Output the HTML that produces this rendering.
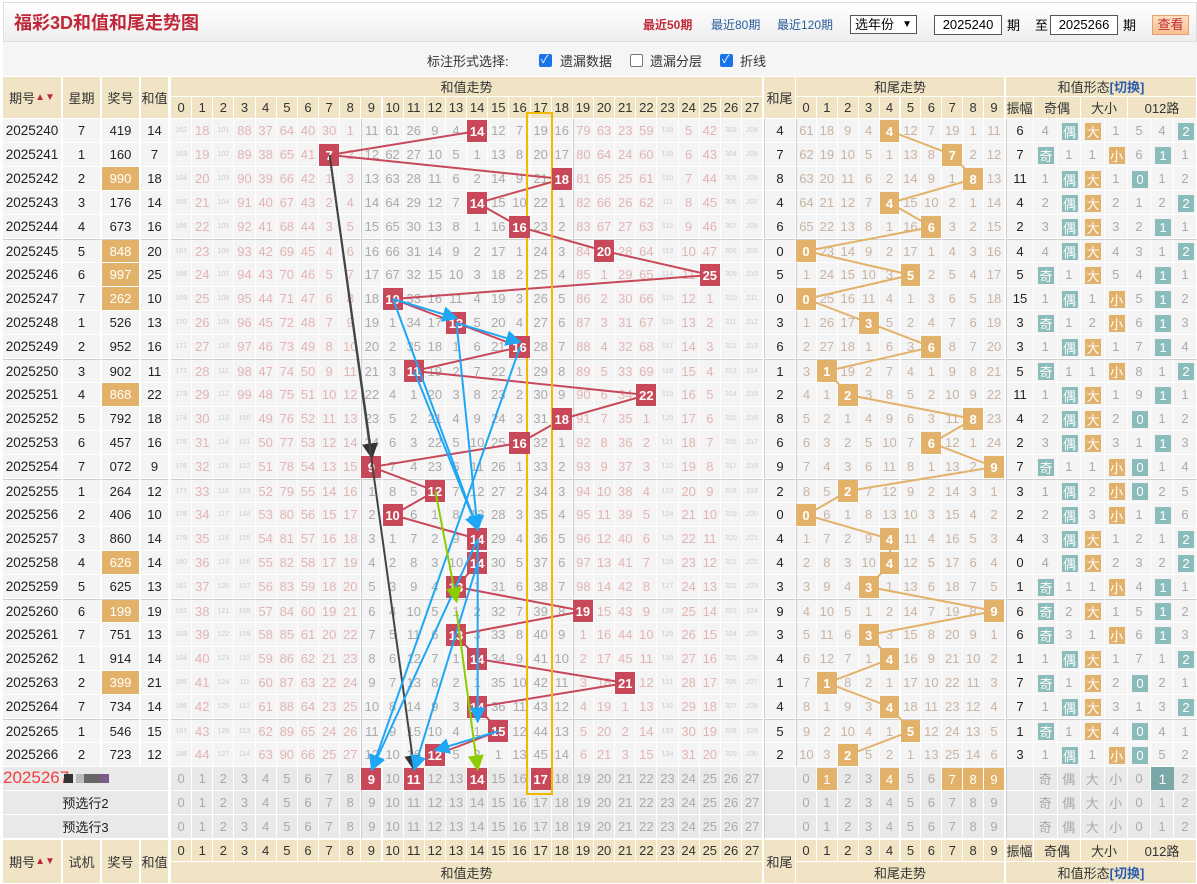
<!DOCTYPE html>
<html><head><meta charset="utf-8">
<style>
*{box-sizing:border-box;margin:0;padding:0}
body{width:1197px;height:884px;overflow:hidden;background:#fff;font-family:"Liberation Sans","Noto Sans CJK SC",sans-serif;position:relative}
.c{position:absolute;display:flex;align-items:center;justify-content:center;border-right:1px solid #fff;border-bottom:1px solid #fff;background:#f4f4f4;font-size:13px;color:#222;white-space:nowrap}
.h{background:#f0e4c5;color:#333;font-size:13px}
.b{position:absolute;display:flex;align-items:center;justify-content:center;color:#fff;font-size:13px;font-weight:bold}
#top{position:absolute;left:3px;top:2px;width:1194px;height:40px;background:linear-gradient(#fff,#eee);border:1px solid #ddd}
#opt{position:absolute;left:3px;top:42px;width:1194px;height:34px;background:#f5f5f5}
.cb{position:absolute;width:13px;height:13px;border-radius:2px}
.on{background:#1a73e8}
.off{border:1px solid #777;background:#fff}
svg{position:absolute;left:0;top:0}
</style></head><body>
<div id="top">
<div style="position:absolute;left:10px;top:6px;font-size:18px;font-weight:bold;color:#c0283a">福彩3D和值和尾走势图</div>
<div style="position:absolute;left:639px;top:13px;font-size:12px;color:#c0283a;font-weight:bold">最近50期</div>
<div style="position:absolute;left:707px;top:13px;font-size:12px;color:#2a5c9c">最近80期</div>
<div style="position:absolute;left:773px;top:13px;font-size:12px;color:#2a5c9c">最近120期</div>
<div style="position:absolute;left:846px;top:12px;width:67px;height:19px;border:1px solid #555;background:#fff;font-size:13px;padding-left:4px;line-height:17px">选年份 <span style="position:absolute;right:4px;font-size:10px">▼</span></div>
<div style="position:absolute;left:930px;top:12px;width:68px;height:20px;border:1px solid #555;background:#fff;font-size:13px;text-align:center;line-height:18px">2025240</div>
<div style="position:absolute;left:1003px;top:12px;font-size:13px">期</div>
<div style="position:absolute;left:1031px;top:12px;font-size:13px">至</div>
<div style="position:absolute;left:1046px;top:12px;width:68px;height:20px;border:1px solid #555;background:#fff;font-size:13px;text-align:center;line-height:18px">2025266</div>
<div style="position:absolute;left:1119px;top:12px;font-size:13px">期</div>
<div style="position:absolute;left:1148px;top:12px;width:37px;height:20px;border:1px solid #e8a070;background:linear-gradient(#fde0c0,#f7c090);font-size:13px;color:#c0283a;text-align:center;line-height:18px">查看</div>
</div>
<div id="opt">
<div style="position:absolute;left:424px;top:9px;font-size:13px;color:#333">标注形式选择:</div>
<div class="cb on" style="left:536px;top:12px"></div><div style="position:absolute;left:538px;top:9px;color:#fff;font-size:11px">✓</div>
<div style="position:absolute;left:557px;top:9px;font-size:13px;color:#333">遗漏数据</div>
<div class="cb off" style="left:627px;top:12px"></div>
<div style="position:absolute;left:647px;top:9px;font-size:13px;color:#333">遗漏分层</div>
<div class="cb on" style="left:717px;top:12px"></div><div style="position:absolute;left:719px;top:9px;color:#fff;font-size:11px">✓</div>
<div style="position:absolute;left:737px;top:9px;font-size:13px;color:#333">折线</div>
</div>
<div id="g"></div>
<script>
var G=document.getElementById('g');
function C(x,y,w,h,t,cls,st){var d=document.createElement('div');d.className='c '+(cls||'');d.style.cssText='left:'+x+'px;top:'+y+'px;width:'+w+'px;height:'+h+'px;'+(st||'');d.innerHTML=t;G.appendChild(d);return d;}
function B(x,y,w,h,t,bg,st){var d=document.createElement('div');d.className='b';d.style.cssText='left:'+x+'px;top:'+y+'px;width:'+w+'px;height:'+h+'px;background:'+bg+';'+(st||'');d.innerHTML=t;return d;}
var SW=21.15,TW=20.9;
function sx(v){return 171+v*SW}
function tx(i){return 796+i*TW}
var R=[[1034,1057.5],[1057.5,1081],[1081,1104.5],[1104.5,1128],[1128,1151],[1151,1174],[1174,1197]];
var per=[],wk=[7,1,2,3,4,5,6,7,1,2,3,4,5,6,7,1,2,3,4,5,6,7,1,2,7,1,2];
var nums=['419','160','990','176','673','848','997','262','526','952','902','868','792','457','072','264','406','860','626','625','199','751','914','399','734','546','723'];
var amp=[6,7,11,4,2,4,5,15,3,3,5,11,4,2,7,3,2,4,0,1,6,6,1,7,7,1,3];
var sums=nums.map(function(n){return +n[0]+ +n[1]+ +n[2]});
var S=[162,18,101,88,37,64,40,30,1,11,61,26,9,4,0,12,7,19,16,79,63,23,59,108,5,42,303,204];
var T=[61,18,9,4,0,12,7,19,1,11],F=[4,0,0,1,5,4,0];
var boxes=[];
var hx=[[3,62,'期号<span style="color:#c0283a;font-size:10px">▲▼</span>'],[63,101,'星期'],[102,140,'奖号'],[141,169,'和值']];
// header
hx.forEach(function(a){C(a[0],77,a[1]-a[0],42,a[2],'h')});
C(171,77,592,20,'和值走势','h');
for(var v=0;v<28;v++)C(sx(v),97,SW,22,v,'h');
C(764,77,32,42,'和尾','h');
C(796,77,209,20,'和尾走势','h');
for(var i=0;i<10;i++)C(tx(i),97,TW,22,i,'h');
C(1006,77,191,20,'和值形态 <span style="color:#2a5cac;font-weight:bold">[切换]</span>','h');
C(1006,97,28,22,'振幅','h');C(1034,97,47,22,'奇偶','h');C(1081,97,47,22,'大小','h');C(1128,97,69,22,'012路','h');
var sp=[],tp=[];
for(var r=0;r<27;r++){
 var y=119+r*24,s=sums[r],t=s%10;
 if(r>0){for(var v=0;v<28;v++)S[v]=(v==s)?0:S[v]+1;for(var i=0;i<10;i++)T[i]=(i==t)?0:T[i]+1;
  var o=s%2,bg=s>=14?0:1,m=s%3;
  var hit=[o==1,o==0,bg==0,bg==1,m==0,m==1,m==2];for(var k=0;k<7;k++)F[k]=hit[k]?0:F[k]+1;}
 var line=(r%5==0&&r>0)?'border-top:1px solid #ccc;':'';
 C(3,y,59,24,'2025'+(240+r),'',line+'font-size:13.5px');C(63,y,38,24,wk[r],'',line);
 var pair=nums[r][0]==nums[r][1]||nums[r][1]==nums[r][2]||nums[r][0]==nums[r][2];
 C(102,y,38,24,nums[r],'',line+(pair?'background:#e3b26a;color:#fff;':''));C(141,y,28,24,s,'',line);
 for(var v=0;v<28;v++){
  var col=(v>=9&&v<=18)?'#aaa':'#e4b4b4',txt=S[v],fs='';
  if(S[v]>=100){fs='font-size:7px;color:#ccc;';}
  C(sx(v),y,SW,24,v==s?'':txt,'',line+'color:'+col+';'+fs+(v==9||v==19?'border-left:1px solid #ccc;':''));
  if(v==s){boxes.push(B(sx(v),y+1,SW-1,22,v,'#c8485a'));sp.push([sx(v)+SW/2,y+12]);}
 }
 C(764,y,32,24,t,'',line+'border-left:1px solid #ccc;');
 for(var i=0;i<10;i++){C(tx(i),y,TW,24,i==t?'':T[i],'',line+'color:#c8b4a4;'+(i==0?'border-left:1px solid #ccc;':''));
  if(i==t){boxes.push(B(tx(i),y+1,TW-1,22,i,'#e3b26a'));tp.push([tx(i)+TW/2,y+12]);}}
 C(1006,y,28,24,amp[r],'',line+'border-left:1px solid #ccc;');
 var lab=['奇','偶','大','小','0','1','2'],bc=['#8bbcbc','#8bbcbc','#e3b26a','#e3b26a','#8bbcbc','#8bbcbc','#8bbcbc'];
 for(var k=0;k<7;k++){var a=R[k];C(a[0],y,a[1]-a[0],24,F[k]==0?'':F[k],'',line+'color:#aaa;');
  if(F[k]==0)boxes.push(B(a[0]+4,y+4,16,17,lab[k],bc[k],'font-weight:normal;font-size:13px'));}
}
// footer rows
for(var f=0;f<3;f++){var y=767+f*24;
 C(3,y,166,24,f==0?'':'预选行'+(f+1),'','background:#e9e9e9;');
 for(var v=0;v<28;v++){C(sx(v),y,SW,24,v,'','background:#e9e9e9;color:#aaa;'+(v==9||v==19?'border-left:1px solid #ccc;':''));
  if(f==0&&(v==9||v==11||v==14||v==17))boxes.push(B(sx(v),y+1,SW-1,22,v,'#c8485a'));}
 C(764,y,32,24,'','','background:#e9e9e9;border-left:1px solid #ccc;');
 for(var i=0;i<10;i++){C(tx(i),y,TW,24,i,'','background:#e9e9e9;color:#aaa;');
  if(f==0&&[1,4,7,8,9].indexOf(i)>=0)boxes.push(B(tx(i),y+1,TW-1,22,i,'#e3b26a','font-weight:normal'));}
 C(1006,y,28,24,'','','background:#e9e9e9;border-left:1px solid #ccc;');
 var lab=['奇','偶','大','小','0','1','2'];
 for(var k=0;k<7;k++){var a=R[k];C(a[0],y,a[1]-a[0],24,lab[k],'','background:#e9e9e9;color:#aaa;');}
 if(f==0)boxes.push(B(1151,y,23,23,'1','#7aa8a8','font-weight:normal;font-size:14px'));
}
var lb=document.createElement('div');lb.style.cssText='position:absolute;left:3px;top:768px;font-size:17px;color:#f04040;';lb.innerHTML='2025267';G.appendChild(lb);
[['#333',64],['#bbb',76],['#666',84],['#666',92],['#7a5a8a',100]].forEach(function(a){var d=document.createElement('div');d.style.cssText='position:absolute;top:774px;left:'+a[1]+'px;width:9px;height:9px;background:'+a[0];G.appendChild(d);});
// bottom header
hx.map(function(a,i){return i==1?[a[0],a[1],'试机']:a}).forEach(function(a){C(a[0],840,a[1]-a[0],44,a[2],'h')});
for(var v=0;v<28;v++)C(sx(v),840,SW,22,v,'h');
C(171,862,592,22,'和值走势','h');
C(764,840,32,44,'和尾','h');
for(var i=0;i<10;i++)C(tx(i),840,TW,22,i,'h');
C(796,862,209,22,'和尾走势','h');
C(1006,840,28,22,'振幅','h');C(1034,840,47,22,'奇偶','h');C(1081,840,47,22,'大小','h');C(1128,840,69,22,'012路','h');
C(1006,862,191,22,'和值形态 <span style="color:#2a5cac;font-weight:bold">[切换]</span>','h');
// lines
var NS='http://www.w3.org/2000/svg';
function svg(){var s=document.createElementNS(NS,'svg');s.setAttribute('width',1197);s.setAttribute('height',884);G.appendChild(s);return s;}
var s1=svg();
function pl(s,pts,c,w){var p=document.createElementNS(NS,'polyline');p.setAttribute('points',pts.map(function(q){return q.join(',')}).join(' '));p.setAttribute('fill','none');p.setAttribute('stroke',c);p.setAttribute('stroke-width',w);s.appendChild(p);}
pl(s1,sp,'#c8485a',2);pl(s1,tp,'#e3b26a',2);
var yr=document.createElementNS(NS,'rect');yr.setAttribute('x',527);yr.setAttribute('y',113);yr.setAttribute('width',25);yr.setAttribute('height',681);yr.setAttribute('fill','none');yr.setAttribute('stroke','#f5b800');yr.setAttribute('stroke-width',2);s1.appendChild(yr);
boxes.forEach(function(b){G.appendChild(b)});
var s2=svg();
s2.innerHTML='<defs><marker id="ab" markerWidth="8" markerHeight="8" refX="7" refY="4" orient="auto"><path d="M0,0L8,4L0,8z" fill="#1ea7f5"/></marker><marker id="ak" markerWidth="8" markerHeight="8" refX="7" refY="4" orient="auto"><path d="M0,0L8,4L0,8z" fill="#333"/></marker><marker id="ag" markerWidth="8" markerHeight="8" refX="7" refY="4" orient="auto"><path d="M0,0L8,4L0,8z" fill="#8ccc00"/></marker></defs>';
function P(v,r){return [sx(v)+SW/2,131+r*24]}
function A(a,b,c,m){var p=document.createElementNS(NS,'line');p.setAttribute('x1',a[0]);p.setAttribute('y1',a[1]);p.setAttribute('x2',b[0]);p.setAttribute('y2',b[1]);p.setAttribute('stroke',c);p.setAttribute('stroke-width',2);p.setAttribute('marker-end','url(#'+m+')');s2.appendChild(p);}
var K='#444',Bl='#1ea7f5',Gr='#8ccc00';
A(P(7,1),P(9,13.6),K,'ak');A(P(7,1),P(11,26.6),K,'ak');
A(P(10,7),P(13,7.8),Bl,'ab');A(P(13,8),P(16,8.8),Bl,'ab');
A(P(10,7),P(14,16.6),Bl,'ab');A(P(13,8),P(14,16.6),Bl,'ab');A(P(11,10),P(14,16.6),Bl,'ab');
A(P(16,9),P(9,26.6),Bl,'ab');A(P(14,17),P(9,26.6),Bl,'ab');A(P(14,18),P(11,26.6),Bl,'ab');
A(P(15,25),P(12,25.8),Bl,'ab');A(P(14,17),P(14,24.6),Bl,'ab');
A(P(12,15),P(13,19.6),Gr,'ag');A(P(13,20),P(14,26.6),Gr,'ag');
</script>
</body></html>
